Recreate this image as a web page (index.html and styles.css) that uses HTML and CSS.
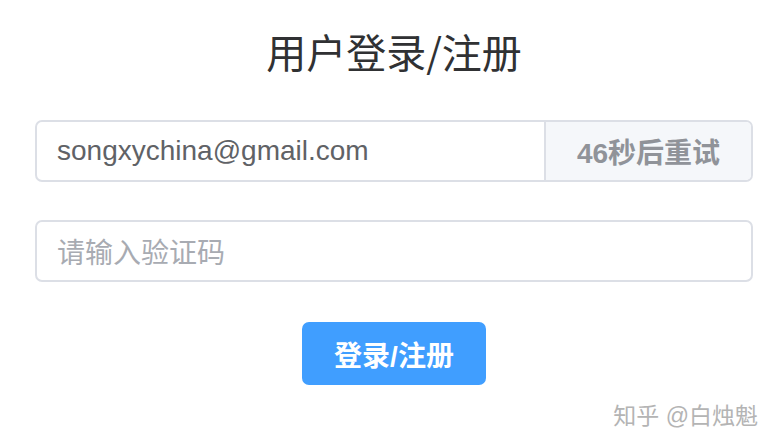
FILE: index.html
```html
<!DOCTYPE html>
<html lang="zh-CN">
<head>
<meta charset="utf-8">
<title>用户登录/注册</title>
<link rel="stylesheet" href="styles.css">
</head>
<body>
<div class="page">
  <h1 class="title">用户登录/注册</h1>
  <div class="form">
    <div class="input-group">
      <div class="input-inner email">songxychina@gmail.com</div>
      <div class="append">46秒后重试</div>
    </div>
    <div class="input-group">
      <div class="input-inner placeholder">请输入验证码</div>
    </div>
    <div class="actions">
      <button class="btn-primary">登录/注册</button>
    </div>
  </div>
  <div class="watermark">知乎 @白烛魁</div>
</div>
</body>
</html>
```

FILE: styles.css
```css
* { box-sizing: border-box; }
html, body {
  margin: 0;
  padding: 0;
  background: #fff;
}
body {
  font-family: "Liberation Sans", "Noto Sans CJK SC", sans-serif;
  width: 778px;
  height: 448px;
  overflow: hidden;
}
.page {
  position: relative;
  height: 448px;
  padding: 23px 25px 0 35px;
}
.title {
  margin: 0;
  font-family: "Noto Sans CJK SC", sans-serif;
  font-size: 40px;
  line-height: 56px;
  font-weight: 400;
  color: #303133;
  text-align: center;
}
.form {
  margin-top: 41px;
  display: flex;
  flex-direction: column;
  gap: 38px;
}
.input-group {
  display: flex;
  height: 62px;
  border: 2px solid #dcdfe6;
  border-radius: 7px;
  overflow: hidden;
}
.input-inner {
  flex: 1;
  display: flex;
  align-items: center;
  padding-left: 20px;
  font-size: 28px;
  color: #606266;
}
.placeholder {
  color: #a8abb2;
}
.append {
  width: 207px;
  display: flex;
  align-items: center;
  justify-content: center;
  background: #f5f7fa;
  border-left: 2px solid #dcdfe6;
  color: #909399;
  font-size: 28px;
  font-weight: 700;
}
.actions {
  display: flex;
  justify-content: center;
  margin-top: 2px;
}
.btn-primary {
  width: 184px;
  height: 63px;
  border: none;
  border-radius: 7px;
  background: #409eff;
  color: #fff;
  font-family: "Liberation Sans", "Noto Sans CJK SC", sans-serif;
  font-size: 28px;
  font-weight: 700;
  padding: 0;
}
.watermark {
  position: absolute;
  right: 20px;
  top: 397px;
  font-size: 23px;
  color: #b4b4b4;
  text-shadow: 0 0 1px #fff;
  white-space: pre;
}
```
